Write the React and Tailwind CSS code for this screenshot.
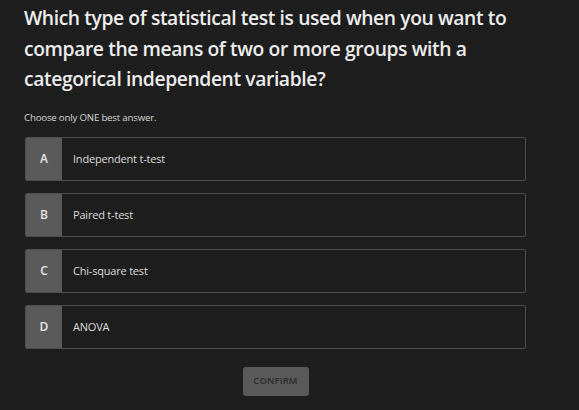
import React, { useState } from 'react';

const options = [
  { key: 'A', label: 'Independent t-test' },
  { key: 'B', label: 'Paired t-test' },
  { key: 'C', label: 'Chi-square test' },
  { key: 'D', label: 'ANOVA' },
];

export default function App() {
  const [selected, setSelected] = useState(null);

  return (
    <div
      className="min-h-screen w-full bg-[#1e1e1e] text-[#ececec] px-[24px] pt-[3px]"
      style={{ fontFamily: '"Open Sans", "Noto Sans", sans-serif' }}
    >
      <h1 className="w-[530px] text-[19.3px] font-semibold leading-[30.5px] text-[#ededed] tracking-[-0.4px]">
        Which type of statistical test is used when you want to compare the means of two or more groups with a categorical independent variable?
      </h1>

      <p className="mt-[16px] text-[9.7px] text-[#d6d6d6] tracking-[-0.2px]">Choose only ONE best answer.</p>

      <div className="mt-[12px] ml-[1px] w-[501px] flex flex-col gap-[12px]">
        {options.map((o) => (
          <button
            key={o.key}
            onClick={() => setSelected(o.key)}
            className={
              'flex h-[44px] w-full items-stretch overflow-hidden rounded-[2px] border text-left ' +
              (selected === o.key ? 'border-[#9a9a9a]' : 'border-[#4d4d4d]')
            }
          >
            <span className="flex w-[36px] items-center justify-center bg-[#5a5a5a] text-[12px] font-semibold text-[#e6e6e6]">
              {o.key}
            </span>
            <span className="flex items-center pl-[11px] text-[11px] text-[#dcdcdc] tracking-[-0.2px]">{o.label}</span>
          </button>
        ))}
      </div>

      <div className="mt-[18px] flex justify-center w-[501px] ml-[1px]">
        <button className="h-[29px] w-[66px] rounded-[3px] bg-[#5a5a5a] text-[9.5px] font-semibold tracking-[0.1px] text-[#2c2c2c]">
          CONFIRM
        </button>
      </div>
    </div>
  );
}
